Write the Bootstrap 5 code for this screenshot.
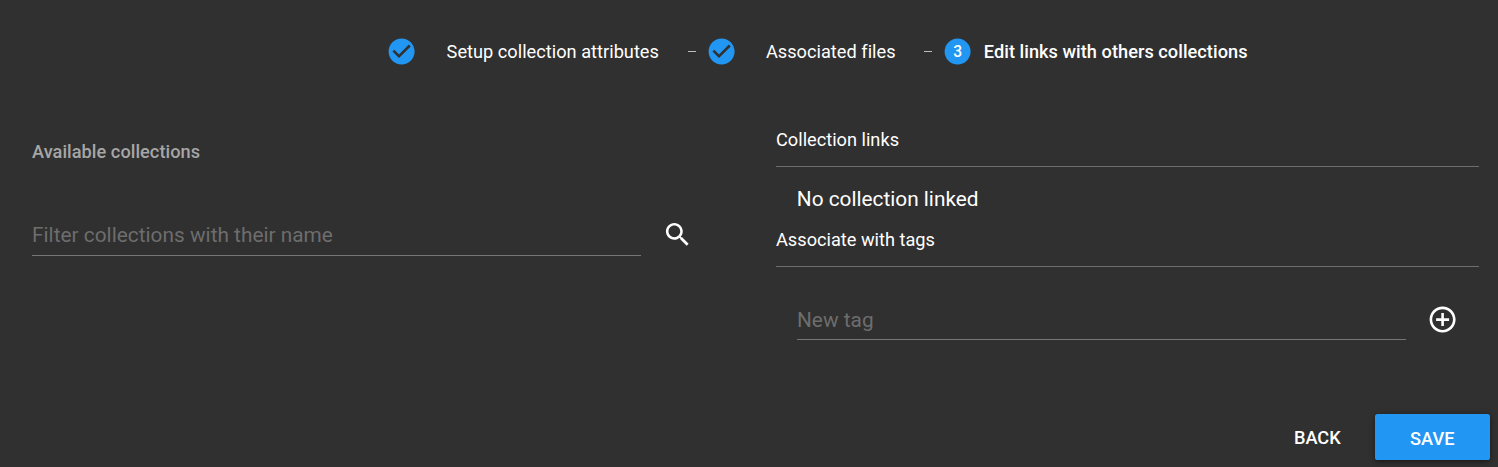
<!DOCTYPE html>
<html lang="en">
<head>
<meta charset="utf-8">
<title>Edit links</title>
<link href="https://cdn.jsdelivr.net/npm/bootstrap@5.3.0/dist/css/bootstrap.min.css" rel="stylesheet">
<style>
body{background:#303030;color:#fff;font-family:Roboto,sans-serif;font-size:18.2px;line-height:26px;height:467px;overflow:hidden}
.stepper{height:103px;padding-left:386px}
.step-icon{width:31.2px;height:31.2px;fill:#2196f3;flex:none}
.step-icon text{fill:#fff;font-size:12px;font-weight:500;text-anchor:middle}
.step-done{margin-left:29.4px;letter-spacing:.015px}
.dash ~ .step-done{margin-left:28.8px}
.dash{width:8px;height:1px;background:#bdbdbd;margin:0 10px 0 29px}
.dash ~ .dash{margin-left:28.6px}
.medium{font-weight:500;letter-spacing:.035px}
.step-active{margin-left:10.5px}
.left-pane{width:776px;padding-left:32px}
.right-pane{width:703px}
.muted-title{color:#a6a6a6;margin-top:36px}
.field{width:609px;height:42px;border:0;border-bottom:1px solid #757575;border-radius:0;background:none!important;color:#fff;padding:0;font-size:20.8px;letter-spacing:.02px;line-height:24px;box-shadow:none!important}
.field::placeholder{color:#6d6d6d;opacity:1}
.filter-row{margin-top:49px}
.tag-row{margin:31px 0 0 21px}
.tag-row .field{padding-top:2px}
.rule{height:1px;background:#6e6e6e;margin-top:13px}
.glyph{width:31.2px;height:31.2px;fill:#fff;display:block;margin:5px 0 0 21px}
.tag-row .glyph{margin-top:5.5px}
.body-text{font-size:20.8px;line-height:31px;margin:17px 0 12px 20.8px}
.footer-bar{height:53px;padding-right:8px}
.act{color:#fff!important;font-size:18.2px;font-weight:500;border:0;border-radius:2.6px;height:46px;padding:2px 0 0}
.back{margin-right:34.3px}
.save{width:115px;background:#2196f3!important;padding:4px .5px 0 0;box-shadow:0 1px 6px rgba(0,0,0,.3),0 2px 3px rgba(0,0,0,.2)}
</style>
</head>
<body class="d-flex flex-column">
<header class="stepper d-flex align-items-center">
  <svg class="step-icon" viewBox="0 0 24 24"><path d="M12 2C6.480 2 2 6.480 2 12s4.480 10 10 10 10-4.480 10-10S17.520 2 12 2zm-2 15-5-5 1.410-1.410L10 14.170l7.590-7.590L19 8l-9 9z"/></svg>
  <span class="step-done">Setup collection attributes</span>
  <span class="dash"></span>
  <svg class="step-icon" viewBox="0 0 24 24"><path d="M12 2C6.480 2 2 6.480 2 12s4.480 10 10 10 10-4.480 10-10S17.520 2 12 2zm-2 15-5-5 1.410-1.410L10 14.170l7.590-7.590L19 8l-9 9z"/></svg>
  <span class="step-done">Associated files</span>
  <span class="dash"></span>
  <svg class="step-icon" viewBox="0 0 24 24"><circle cx="12" cy="12" r="10"/><text x="12" y="16.200">3</text></svg>
  <span class="medium step-active">Edit links with others collections</span>
</header>
<main class="d-flex flex-grow-1">
  <section class="left-pane">
    <div class="muted-title medium">Available collections</div>
    <div class="d-flex filter-row"><input class="form-control field" placeholder="Filter collections with their name">
      <svg class="glyph" viewBox="0 0 24 24"><path d="M15.500 14h-.79l-.28-.27C15.410 12.590 16 11.110 16 9.500 16 5.910 13.090 3 9.500 3S3 5.910 3 9.500 5.910 16 9.500 16c1.610 0 3.090-.59 4.230-1.570l.27.28v.79l5 4.990L20.490 19l-4.990-5zm-6 0C7.010 14 5 11.990 5 9.500S7.010 5 9.500 5 14 7.010 14 9.500 11.990 14 9.500 14z"/></svg></div>
  </section>
  <section class="right-pane">
    <div class="pt-4">Collection links</div><div class="rule"></div>
    <div class="body-text">No collection linked</div>
    <div>Associate with tags</div><div class="rule"></div>
    <div class="d-flex tag-row"><input class="form-control field" placeholder="New tag">
      <svg class="glyph" viewBox="0 0 24 24"><path d="M13 7h-2v4H7v2h4v4h2v-4h4v-2h-4V7zm-1-5C6.480 2 2 6.480 2 12s4.480 10 10 10 10-4.480 10-10S17.520 2 12 2zm0 18c-4.410 0-8-3.590-8-8s3.590-8 8-8 8 3.590 8 8-3.590 8-8 8z"/></svg></div>
  </section>
</main>
<footer class="footer-bar d-flex justify-content-end"><button class="btn act back">BACK</button><button class="btn act save">SAVE</button></footer>
<script src="https://cdn.jsdelivr.net/npm/bootstrap@5.3.0/dist/js/bootstrap.bundle.min.js"></script>
</body>
</html>
